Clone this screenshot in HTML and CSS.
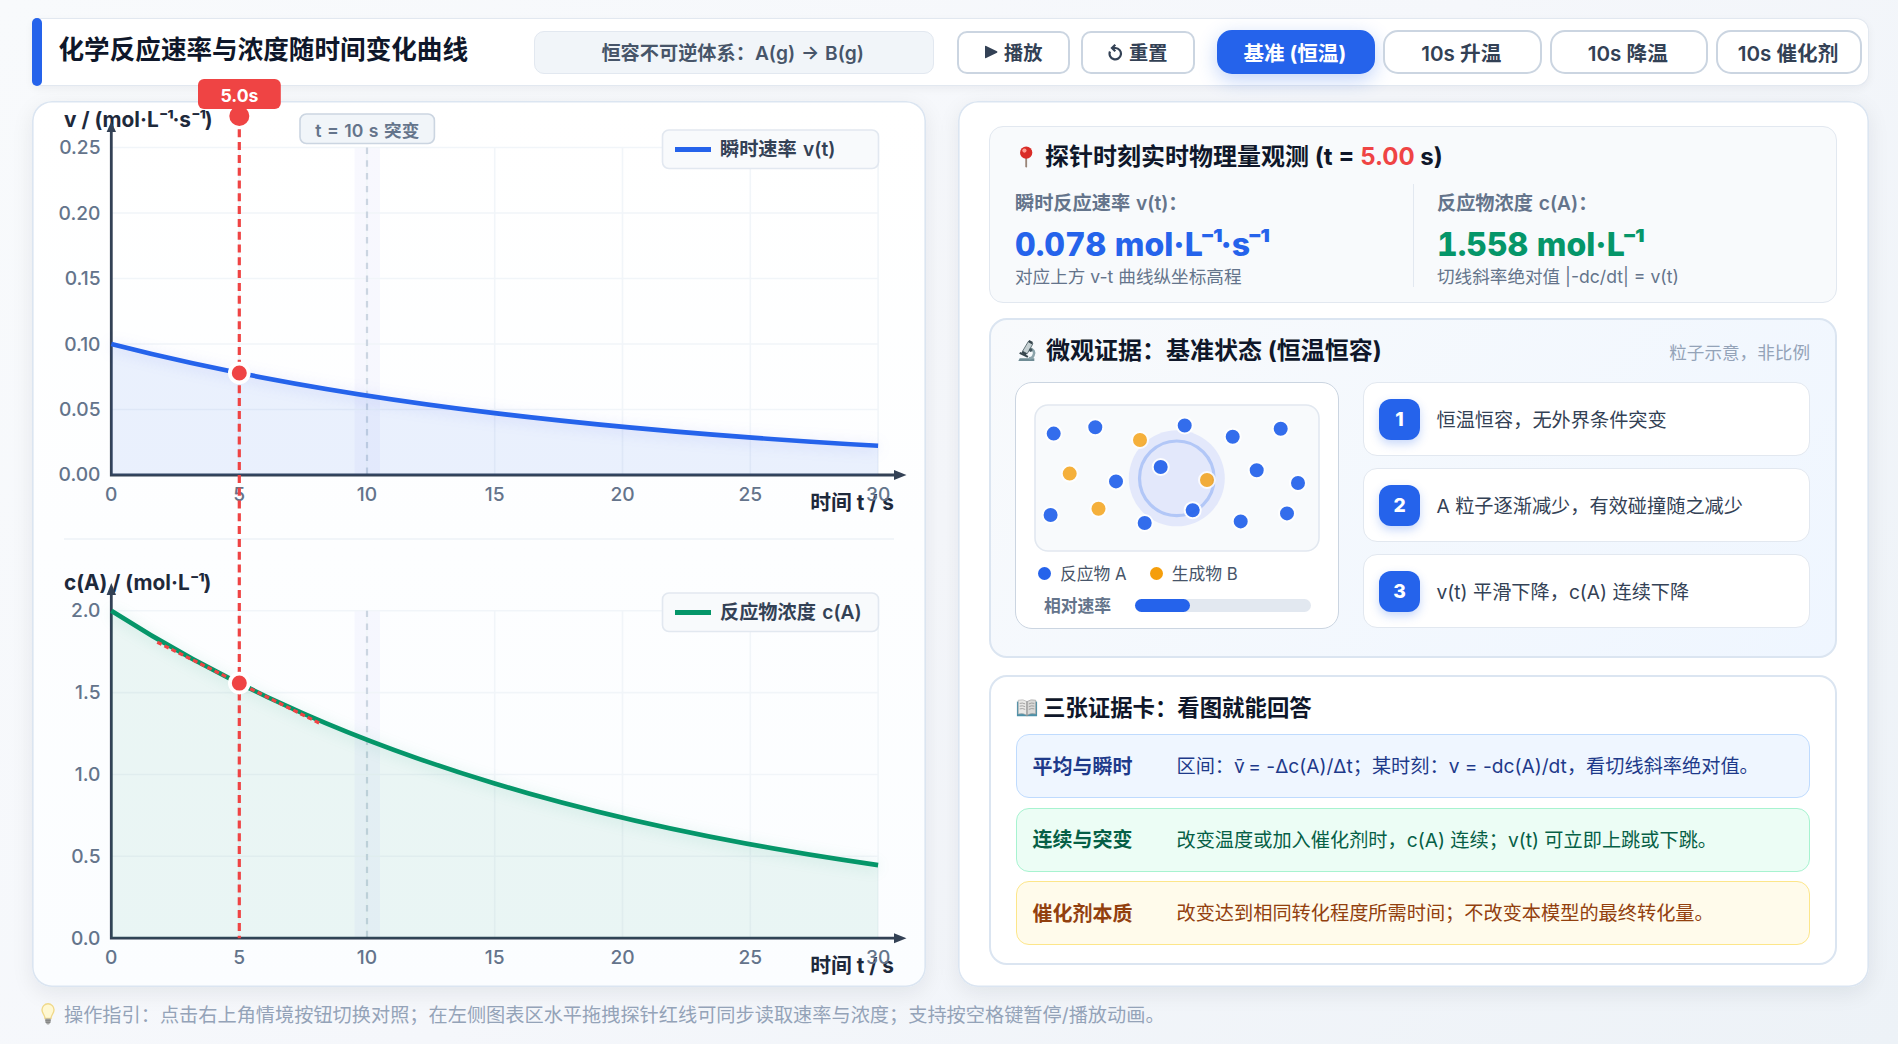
FILE: index.html
```
<!DOCTYPE html>
<html lang="zh-CN">

<head>
    <meta charset="UTF-8">
    <title>化学反应速率与浓度随时间变化曲线</title>
    <link rel="stylesheet" href="styles.css">
</head>

<body>

    <header class="topbar">
        <h1>化学反应速率与浓度随时间变化曲线</h1>
        <div class="system">恒容不可逆体系：A(g) → B(g)</div>
        <div class="controls">
            <button class="btn">
                <svg class="ico-play" viewBox="0 0 14 14"><path d="M1 1.6Q1 .4 2.1 1L13 6.3Q14 7 13 7.7L2.1 13Q1 13.6 1 12.4Z" fill="#334155"/></svg>播放
            </button>
            <button class="btn">
                <svg class="ico-reset" viewBox="0 0 15 18"><path d="M2 8.5A5.7 5.7 0 1 0 7.5 5H4M7.3 1.8L4 5L7.3 8.2" fill="none" stroke="#334155" stroke-width="2.2"/></svg>重置
            </button>
        </div>
        <div class="modes">
            <button class="mode active">基准 (恒温)</button>
            <button class="mode">10s 升温</button>
            <button class="mode">10s 降温</button>
            <button class="mode mode-last">10s 催化剂</button>
        </div>
    </header>

    <main class="container">
        <section class="panel charts">
            <svg class="plot" viewBox="32 101 894 886">
                <!-- t = 10 s -->
                <g class="band">
                    <rect x="354.5" y="147.5" width="25.5" height="327.5"/>
                    <rect x="354.5" y="610.7" width="25.5" height="327.5"/>
                </g>
                <path class="grid" d="M111.3 147.5H878.1M111.3 213H878.1M111.3 278.5H878.1M111.3 344H878.1M111.3 409.5H878.1M239.1 147.5V475M366.9 147.5V475M494.7 147.5V475M622.5 147.5V475M750.3 147.5V475M878.1 147.5V475"/>
                <path class="grid" d="M111.3 610.7H878.1M111.3 692.6H878.1M111.3 774.5H878.1M111.3 856.3H878.1M239.1 610.7V938.2M366.9 610.7V938.2M494.7 610.7V938.2M622.5 610.7V938.2M750.3 610.7V938.2M878.1 610.7V938.2"/>
                <path class="event" d="M367 147.5V475M367 610.7V938.2"/>
                <path class="divider" d="M64 539H894"/>

                <g class="title">
                    <text x="64" y="127">v / (mol·L<tspan class="sup">⁻¹</tspan>·s<tspan class="sup">⁻¹</tspan>)</text>
                    <text x="64" y="590">c(A) / (mol·L<tspan class="sup">⁻¹</tspan>)</text>
                    <text x="894" y="510" text-anchor="end">时间 t / s</text>
                    <text x="894" y="973.2" text-anchor="end">时间 t / s</text>
                </g>

                <path class="axis" d="M111.3 130V475H896M111.3 593V938.2H896"/>
                <path class="arrow" d="M111.3 121.5L116 132H106.6ZM111.3 583L116 595H106.6ZM906.5 475L894 480V470ZM906.5 938.2L894 943.2V933.2Z"/>

                <path class="fill-v" d="M111.3 344C239.1 376.8 366.9 397.7 494.7 413.1S750.3 438.5 878.1 445.8V475H111.3Z"/>
                <path class="fill-c" d="M111.3 610.7C239.1 692.6 366.9 744.8 494.7 783.5S750.3 846.9 878.1 865.1V938.2H111.3Z"/>
                <path class="line line-v" d="M111.3 344C239.1 376.8 366.9 397.7 494.7 413.1S750.3 438.5 878.1 445.8"/>
                <path class="line line-c" d="M111.3 610.7C239.1 692.6 366.9 744.8 494.7 783.5S750.3 846.9 878.1 865.1"/>
                <path class="tangent" d="M157.3 642.3L320.9 723.9"/>

                <g class="tick" text-anchor="end">
                    <text x="100.5" y="154">0.25</text>
                    <text x="100.5" y="219.5">0.20</text>
                    <text x="100.5" y="285">0.15</text>
                    <text x="100.5" y="350.5">0.10</text>
                    <text x="100.5" y="416">0.05</text>
                    <text x="100.5" y="481.3">0.00</text>
                    <text x="100.5" y="617">2.0</text>
                    <text x="100.5" y="699">1.5</text>
                    <text x="100.5" y="781">1.0</text>
                    <text x="100.5" y="862.6">0.5</text>
                    <text x="100.5" y="944.5">0.0</text>
                </g>
                <g class="tick" text-anchor="middle">
                    <text x="111.3" y="501">0</text>
                    <text x="239.1" y="501">5</text>
                    <text x="366.9" y="501">10</text>
                    <text x="494.7" y="501">15</text>
                    <text x="622.5" y="501">20</text>
                    <text x="750.3" y="501">25</text>
                    <text x="878.1" y="501">30</text>
                    <text x="111.3" y="964">0</text>
                    <text x="239.1" y="964">5</text>
                    <text x="366.9" y="964">10</text>
                    <text x="494.7" y="964">15</text>
                    <text x="622.5" y="964">20</text>
                    <text x="750.3" y="964">25</text>
                    <text x="878.1" y="964">30</text>
                </g>

                <g class="legend">
                    <rect x="662.5" y="130" width="216" height="38.5" rx="6.4"/>
                    <path d="M675 149.5H711" stroke="#2563eb"/>
                    <text x="720" y="156.3">瞬时速率 v(t)</text>
                    <rect x="662.5" y="593" width="216" height="38.5" rx="6.4"/>
                    <path d="M675 612.5H711" stroke="#059669"/>
                    <text x="720" y="619.3">反应物浓度 c(A)</text>
                </g>
                <g class="tag">
                    <rect x="300" y="114" width="134.4" height="29.5" rx="6.4"/>
                    <text x="367.2" y="136.5" text-anchor="middle">t = 10 s 突变</text>
                </g>

                <!-- probe -->
                <g class="probe">
                    <path d="M239.3 116.5V938.2"/>
                    <circle cx="239.3" cy="116" r="10"/>
                    <rect x="198" y="79" width="82.8" height="30" rx="6"/>
                    <text x="239.4" y="102" text-anchor="middle">5.0s</text>
                    <circle class="dot" cx="239.3" cy="373" r="9.4"/>
                    <circle class="dot" cx="239.3" cy="683.1" r="9.4"/>
                </g>
            </svg>
        </section>

        <section class="panel side">
            <article class="card observe">
                <h2>
                    <svg class="emoji" viewBox="0 0 24 24"><path d="M11.2 11h2v11l-1 2-1-2z" fill="#9a8578"/><circle cx="12.2" cy="7.3" r="6.7" fill="#d92c27"/><circle cx="10.3" cy="5" r="2.3" fill="#ff9d92"/></svg>
                    <span>探针时刻实时物理量观测 (t = <span class="now">5.00</span> s)</span>
                </h2>
                <div class="values">
                    <div class="value">
                        <div class="name">瞬时反应速率 v(t)：</div>
                        <div class="num blue">0.078 mol·L<span class="sup">⁻¹</span>·s<span class="sup">⁻¹</span></div>
                        <div class="note">对应上方 v-t 曲线纵坐标高程</div>
                    </div>
                    <div class="value">
                        <div class="name">反应物浓度 c(A)：</div>
                        <div class="num green">1.558 mol·L<span class="sup">⁻¹</span></div>
                        <div class="note">切线斜率绝对值 |-dc/dt| = v(t)</div>
                    </div>
                </div>
            </article>

            <article class="card micro">
                <div class="micro-head">
                    <h2>
                        <svg class="emoji" viewBox="0 0 24 24"><path d="M4 20h16v3H2.500l1.500-3z" fill="#6f8c95"/><path d="M14 9q8 2 5 8-1 3-5 3" fill="none" stroke="#8ba3aa" stroke-width="2.800"/><path d="M4 14l9 4.500" stroke="#37464d" stroke-width="2.200"/><path d="M13.500 1.500l5 2.500-6.300 11-5-2.800z" fill="#c5d0d2" stroke="#57686f"/><path d="M14.500 0l4 2.200-1.300 2.300-4-2.200zM7 12l5 2.800-1.500 2L6 14z" fill="#37464d"/><circle cx="16" cy="11" r="2" fill="#42555d"/></svg>
                        <span>微观证据：基准状态 (恒温恒容)</span>
                    </h2>
                    <span class="hint">粒子示意，非比例</span>
                </div>
                <div class="micro-body">
                    <div class="box">
                        <svg class="chamber" viewBox="1034 404 286 148">
                            <rect x="1035" y="405" width="284" height="146" rx="13" fill="#f8fafc" stroke="#e2e8f0" stroke-width="1.6"/>
                            <circle cx="1176.8" cy="478.3" r="48" fill="#e3e8fb"/>
                            <circle cx="1176.8" cy="478.3" r="37.3" fill="none" stroke="#b2c7f7" stroke-width="3.2"/>
                            <g class="pa">
                                <circle cx="1053.7" cy="433.6" r="8"/>
                                <circle cx="1095.3" cy="427.2" r="8"/>
                                <circle cx="1184.7" cy="425.5" r="8"/>
                                <circle cx="1232.7" cy="436.7" r="8"/>
                                <circle cx="1280.7" cy="428.8" r="8"/>
                                <circle cx="1116" cy="481.4" r="8"/>
                                <circle cx="1160.7" cy="467" r="8"/>
                                <circle cx="1256.7" cy="470.2" r="8"/>
                                <circle cx="1298" cy="483" r="8"/>
                                <circle cx="1050.6" cy="515" r="8"/>
                                <circle cx="1192.7" cy="510.2" r="8"/>
                                <circle cx="1144.7" cy="523" r="8"/>
                                <circle cx="1240.7" cy="521.4" r="8"/>
                                <circle cx="1287" cy="513.4" r="8"/>
                            </g>
                            <g class="pb">
                                <circle cx="1140" cy="440" r="8"/>
                                <circle cx="1069.7" cy="473.6" r="8"/>
                                <circle cx="1207" cy="480" r="8"/>
                                <circle cx="1098.5" cy="508.7" r="8"/>
                            </g>
                        </svg>
                        <div class="keys">
                            <span class="key"><i class="ball a"></i>反应物 A</span>
                            <span class="key"><i class="ball b"></i>生成物 B</span>
                        </div>
                        <div class="rate">
                            <span>相对速率</span>
                            <div class="bar"><div class="bar-fill" style="width: 31.2%"></div></div>
                        </div>
                    </div>
                    <ol class="steps">
                        <li><b>1</b>恒温恒容，无外界条件突变</li>
                        <li><b>2</b>A 粒子逐渐减少，有效碰撞随之减少</li>
                        <li><b>3</b>v(t) 平滑下降，c(A) 连续下降</li>
                    </ol>
                </div>
            </article>

            <article class="card evidence">
                <h2>
                    <svg class="emoji" viewBox="0 0 24 24"><path d="M1 5h22v16H1z" fill="#4c90a8"/><path d="M2.500 3.500Q8 2 12 5v15q-4-3-9.500-1.500z" fill="#e9e9e7" stroke="#aaa" stroke-width=".7"/><path d="M21.500 3.500Q16 2 12 5v15q4-3 9.500-1.500z" fill="#d9d9d7" stroke="#999" stroke-width=".7"/><path d="M12 5v16M4 7q3-1 6 .5M4 10q3-1 6 .5M4 13q3-1 6 .5M14 7.500q3-1.500 6-.5M14 10.500q3-1.500 6-.5M14 13.500q3-1.500 6-.5" fill="none" stroke="#8b8b8b" stroke-width=".8"/></svg>
                    <span>三张证据卡：看图就能回答</span>
                </h2>
                <div class="row row-blue"><strong>平均与瞬时</strong><span>区间：<span class="mean">v̄</span> = -Δc(A)/Δt；某时刻：v = -dc(A)/dt，看切线斜率绝对值。</span></div>
                <div class="row row-green"><strong>连续与突变</strong><span>改变温度或加入催化剂时，c(A) 连续；v(t) 可立即上跳或下跳。</span></div>
                <div class="row row-amber"><strong>催化剂本质</strong><span>改变达到相同转化程度所需时间；不改变本模型的最终转化量。</span></div>
            </article>
        </section>
    </main>

    <footer>
        <svg class="bulb" viewBox="0 0 14 22"><path d="M7 .8a6 6 0 0 1 6 6.200c0 3.500-3 5-3 8.500H4C4 12 1 10.500 1 7A6 6 0 0 1 7 .8z" fill="#fff8d2" stroke="#f0d98a" stroke-width="1.400"/><path d="M4.300 15.500h5.400V19L8 21.500H6L4.300 19z" fill="#a9aaa9"/><path d="M4.300 17.200h5.400M4.600 19.200h4.800" stroke="#777"/></svg>
        操作指引：点击右上角情境按钮切换对照；在左侧图表区水平拖拽探针红线可同步读取速率与浓度；支持按空格键暂停/播放动画。
    </footer>

</body>

</html>
```

FILE: styles.css
```
* {
    box-sizing: border-box;
}

body {
    margin: 0;
    height: 1044px;
    padding: 18px 29px 0 32px;
    overflow: hidden;
    color: #0f172a;
    background: linear-gradient(135deg, #f8fafc, #f5f7fb 50%, #edf2f7);
    font-family: Inter, "Noto Sans CJK SC", sans-serif;
    font-size: 19.2px;
}

h1,
h2 {
    margin: 0;
    font-weight: 700;
}

button {
    padding: 0;
    font-family: inherit;
    color: #334155;
    background: #fff;
    border: 2px solid #cbd5e1;
}

.topbar {
    display: flex;
    align-items: center;
    height: 68px;
    padding: 0 6px 0 18px;
    background: #fff;
    border: 1.6px solid #e2e8f0;
    border-left: 0;
    border-radius: 6px 13px 13px 6px;
    box-shadow: 0 3px 8px rgba(15, 23, 42, .05);
}

.topbar::before {
    content: "";
    width: 10px;
    height: 68px;
    margin-left: -18px;
    background: #2563eb;
    border-radius: 5px;
}

.topbar h1 {
    width: 475.5px;
    margin-left: 16.5px;
    padding-bottom: 5px;
    font-size: 25.6px;
    line-height: 34px;
    white-space: nowrap;
}

.system {
    width: 400px;
    height: 43px;
    padding-right: 2px;
    line-height: 43px;
    text-align: center;
    font-weight: 600;
    color: #475569;
    background: #f1f5f9;
    border: 1.6px solid #e2e8f0;
    border-radius: 10px;
    word-spacing: 1px;
}

.controls {
    display: flex;
    gap: 11px;
    margin-left: 23px;
}

.btn {
    display: flex;
    justify-content: center;
    align-items: center;
    gap: 6px;
    width: 113.5px;
    height: 43px;
    padding-bottom: 1px;
    font-size: 19.2px;
    font-weight: 600;
    border-radius: 10px;
}

.ico-play {
    width: 14px;
    height: 14px;
}

.ico-reset {
    width: 15px;
    height: 18px;
}

.modes {
    display: flex;
    gap: 8px;
    margin-left: 22px;
}

.mode {
    width: 158.5px;
    height: 43.5px;
    padding: 0 2px 1px 0;
    font-size: 20.6px;
    font-weight: 600;
    border-radius: 15px;
}

.mode.active {
    color: #fff;
    font-weight: 700;
    background: #2563eb;
    border-color: #2563eb;
    box-shadow: 0 6px 19px rgba(37, 99, 235, .28);
}

.mode-last {
    width: 146px;
}

.container {
    display: grid;
    grid-template-columns: 894px 911px;
    gap: 32px;
    margin-top: 15px;
    height: 886px;
}

.panel {
    background: #fff;
    border-radius: 20px;
    box-shadow: inset 0 0 0 1.6px #dbe5f1, 0 6px 22px rgba(15, 23, 42, .08);
}

/* charts */
.charts {
    background: linear-gradient(#fff, #fbfdff);
}

.plot {
    display: block;
    width: 894px;
    height: 886px;
    overflow: visible;
    font-size: 19.2px;
}

.band {
    fill: #6366f1;
    fill-opacity: .045;
}

.grid {
    fill: none;
    stroke: #f1f5f9;
    stroke-width: 1.6;
}

.event {
    stroke: #cbd5e1;
    stroke-width: 2.2;
    stroke-dasharray: 6.4 6.4;
}

.divider {
    stroke: #f1f5f9;
    stroke-width: 2;
}

.title {
    font-size: 20.8px;
    font-weight: 700;
    fill: #1e293b;
}

.title .sup {
    letter-spacing: -1.5px;
}

.axis {
    fill: none;
    stroke: #334155;
    stroke-width: 2.8;
}

.arrow {
    fill: #334155;
}

.tick {
    font-weight: 500;
    fill: #64748b;
}

.fill-v {
    fill: #2563eb;
    fill-opacity: .09;
}

.fill-c {
    fill: #05876a;
    fill-opacity: .07;
}

.line {
    fill: none;
    stroke-width: 4.6;
}

.line-v {
    stroke: #2563eb;
    filter: drop-shadow(0 2px 7px rgba(79, 99, 235, .2));
}

.line-c {
    stroke: #059669;
    filter: drop-shadow(0 2px 7px rgba(5, 150, 105, .16));
}

.tangent {
    stroke: #ef4444;
    stroke-width: 3.2;
    stroke-dasharray: 4.8 3.2;
}

.legend {
    font-weight: 600;
    word-spacing: 1.5px;
}

.legend rect {
    fill: #f8fafc;
    stroke: #e2e8f0;
    stroke-width: 1.6;
}

.legend path {
    stroke-width: 4.8;
}

.legend text {
    fill: #334155;
}

.tag {
    font-size: 17.6px;
    font-weight: 600;
    word-spacing: 1.1px;
}

.tag rect {
    fill: #f1f5f9;
    stroke: #cbd5e1;
    stroke-width: 1.6;
}

.tag text {
    fill: #64748b;
}

.probe {
    fill: #ef4444;
    font-size: 17.6px;
    font-weight: 700;
}

.probe path {
    stroke: #ef4444;
    stroke-width: 3.2;
    stroke-dasharray: 8 4.8;
}

.probe text {
    fill: #fff;
}

.probe .dot {
    stroke: #fff;
    stroke-width: 3.8;
}

/* right column */
.side {
    display: flex;
    flex-direction: column;
    padding: 25px 32px 0 31px;
}

.card {
    padding: 0 25px;
    border: 2px solid #dbe5f1;
    border-radius: 18px;
}

.card h2 {
    display: flex;
    align-items: center;
    height: 32px;
    font-size: 24px;
    line-height: 32px;
    white-space: nowrap;
}

.emoji {
    width: 22px;
    height: 22px;
    margin-right: 8px;
}

.observe {
    height: 177px;
    padding-top: 14px;
    background: #f8fafc;
    border: 1.6px solid #e2e8f0;
    border-radius: 14px;
}

.now {
    color: #ef4444;
}

.values {
    display: flex;
    margin-top: 11px;
}

.value {
    width: 398px;
    height: 103px;
    padding-top: 4px;
}

.value + .value {
    padding-left: 23px;
    border-left: 1.6px solid #e2e8f0;
}

.name {
    line-height: 30px;
    font-weight: 600;
    color: #64748b;
    word-spacing: 1px;
}

.num {
    margin-top: 3.5px;
    font-size: 32px;
    line-height: 46px;
    font-weight: 800;
    font-variant-numeric: tabular-nums;
    white-space: nowrap;
}

.num .sup {
    margin-left: -3px;
    letter-spacing: -3px;
}

.blue {
    color: #2563eb;
}

.green {
    color: #059669;
}

.note {
    margin-top: -3.5px;
    font-size: 17.6px;
    line-height: 26px;
    color: #64748b;
}

.micro {
    height: 340px;
    margin-top: 15px;
    padding-top: 15px;
    background: linear-gradient(135deg, #f8fafc, #eff6ff);
}

.micro-head {
    display: flex;
    justify-content: space-between;
    align-items: center;
}

.hint {
    font-size: 17.6px;
    color: #94a3b8;
}

.micro-body {
    display: flex;
    justify-content: space-between;
    margin-top: 15px;
}

.box {
    width: 324px;
    height: 247px;
    margin-left: -1px;
    padding: 20.5px 17px 0;
    background: #fff;
    border: 1.6px solid #cbd5e1;
    border-radius: 17px;
}

.chamber {
    display: block;
    width: 286px;
    height: 148px;
    margin-left: 1px;
}

.chamber .pa,
.chamber .pb {
    stroke: #fff;
    stroke-width: 2;
    fill: #2563eb;
    opacity: .93;
}

.chamber .pb {
    fill: #f59e0b;
    opacity: .8;
}

.keys {
    display: flex;
    gap: 23px;
    margin: 10px 0 0 5px;
    font-size: 16.8px;
    line-height: 24px;
    color: #475569;
}

.key {
    display: flex;
    align-items: center;
}

.ball {
    width: 13px;
    height: 13px;
    margin-right: 9px;
    border-radius: 50%;
}

.ball.a {
    background: #2563eb;
}

.ball.b {
    background: #f59e0b;
}

.rate {
    display: flex;
    justify-content: space-between;
    align-items: center;
    margin: 8px 10px 0 11px;
    font-size: 16.8px;
    line-height: 24px;
    font-weight: 600;
    color: #64748b;
}

.bar {
    width: 176px;
    height: 13px;
    background: #e2e8f0;
    border-radius: 7px;
}

.bar-fill {
    height: 13px;
    background: #2563eb;
    border-radius: 7px;
}

.steps {
    display: flex;
    flex-direction: column;
    gap: 12px;
    width: 447px;
    margin: 0;
    padding: 0;
    list-style: none;
    color: #334155;
}

.steps li {
    display: flex;
    align-items: center;
    height: 74px;
    padding-left: 15px;
    background: #fff;
    border: 1px solid #e2e8f0;
    border-radius: 14px;
}

.steps b {
    width: 41px;
    height: 41px;
    margin-right: 16.5px;
    line-height: 41px;
    text-align: center;
    font-weight: 800;
    color: #fff;
    background: #2563eb;
    border-radius: 12px;
    box-shadow: 0 4px 10px rgba(37, 99, 235, .25);
}

.evidence {
    height: 290px;
    margin-top: 17px;
    padding-top: 15px;
}

.evidence h2 {
    margin-bottom: 10px;
    font-size: 22.4px;
}

.evidence .emoji {
    margin-right: 5px;
}

.row {
    display: flex;
    align-items: center;
    height: 64px;
    margin-bottom: 9.5px;
    padding: 0 0 2px 15.5px;
    border: 1.2px solid;
    border-radius: 13px;
    white-space: nowrap;
}

.row strong {
    width: 144px;
    font-size: 20px;
    font-weight: 700;
}

.mean {
    margin-right: -2px;
}

.row-blue {
    color: #1e3a8a;
    background: #eff6ff;
    border-color: #bfdbfe;
}

.row-green {
    color: #065f46;
    background: #ecfdf5;
    border-color: #a7f3d0;
}

.row-amber {
    color: #92400e;
    background: #fffbeb;
    border-color: #fde68a;
}

footer {
    display: flex;
    align-items: center;
    height: 32px;
    margin-top: 11px;
    padding-left: 9px;
    color: #94a3b8;
}

.bulb {
    width: 14px;
    height: 22px;
    margin-right: 9px;
}
```
